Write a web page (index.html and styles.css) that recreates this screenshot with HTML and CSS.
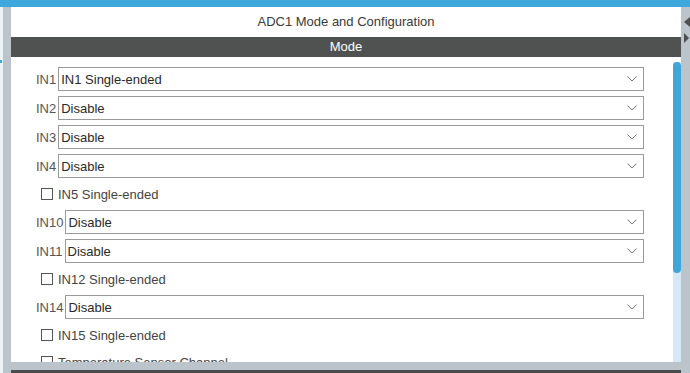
FILE: index.html
```html
<!DOCTYPE html>
<html lang="en">
<head>
    <meta charset="UTF-8" />
    <meta name="viewport" content="width=device-width, initial-scale=1.0" />
    <title>ADC1 Mode and Configuration</title>
    <link rel="stylesheet" href="styles.css">
</head>
<body>
    <div class="topbar"></div>
    <div class="frame">
        <div class="side-left"><span class="side-mark"></span></div>
        <div class="column">
            <div class="panel">
                <div class="panel-title">ADC1 Mode and Configuration</div>
                <div class="panel-header">Mode</div>
                <div class="panel-body">
                    <div class="content">
                        <div class="row">
                            <label class="row-label">IN1</label>
                            <div class="select"><span>IN1 Single-ended</span><svg class="chevron" width="10" height="6" viewBox="0 0 10 6"><path d="M0.5 0.5 L5 5 L9.5 0.5" fill="none" stroke="#777" stroke-width="1"/></svg></div>
                        </div>
                        <div class="row">
                            <label class="row-label">IN2</label>
                            <div class="select"><span>Disable</span><svg class="chevron" width="10" height="6" viewBox="0 0 10 6"><path d="M0.5 0.5 L5 5 L9.5 0.5" fill="none" stroke="#777" stroke-width="1"/></svg></div>
                        </div>
                        <div class="row">
                            <label class="row-label">IN3</label>
                            <div class="select"><span>Disable</span><svg class="chevron" width="10" height="6" viewBox="0 0 10 6"><path d="M0.5 0.5 L5 5 L9.5 0.5" fill="none" stroke="#777" stroke-width="1"/></svg></div>
                        </div>
                        <div class="row">
                            <label class="row-label">IN4</label>
                            <div class="select"><span>Disable</span><svg class="chevron" width="10" height="6" viewBox="0 0 10 6"><path d="M0.5 0.5 L5 5 L9.5 0.5" fill="none" stroke="#777" stroke-width="1"/></svg></div>
                        </div>
                        <div class="check-row"><span class="box"></span>IN5 Single-ended</div>
                        <div class="row">
                            <label class="row-label">IN10</label>
                            <div class="select"><span>Disable</span><svg class="chevron" width="10" height="6" viewBox="0 0 10 6"><path d="M0.5 0.5 L5 5 L9.5 0.5" fill="none" stroke="#777" stroke-width="1"/></svg></div>
                        </div>
                        <div class="row">
                            <label class="row-label">IN11</label>
                            <div class="select"><span>Disable</span><svg class="chevron" width="10" height="6" viewBox="0 0 10 6"><path d="M0.5 0.5 L5 5 L9.5 0.5" fill="none" stroke="#777" stroke-width="1"/></svg></div>
                        </div>
                        <div class="check-row"><span class="box"></span>IN12 Single-ended</div>
                        <div class="row">
                            <label class="row-label">IN14</label>
                            <div class="select"><span>Disable</span><svg class="chevron" width="10" height="6" viewBox="0 0 10 6"><path d="M0.5 0.5 L5 5 L9.5 0.5" fill="none" stroke="#777" stroke-width="1"/></svg></div>
                        </div>
                        <div class="check-row"><span class="box"></span>IN15 Single-ended</div>
                        <div class="check-row"><span class="box"></span>Temperature Sensor Channel</div>
                    </div>
                    <div class="scrollbar">
                        <div class="track"><div class="thumb"></div></div>
                    </div>
                </div>
            </div>
            <div class="bottom-bar"></div>
        </div>
        <div class="side-right">
            <svg width="8" height="30" viewBox="0 0 8 30">
                <polygon points="7,3 1,8 7,13" fill="#4e4f4f"/>
                <polygon points="1,19 6,24 1,29" fill="#4e4f4f"/>
            </svg>
        </div>
    </div>
</body>
</html>
```

FILE: styles.css
```css
body {
    font-family: "Liberation Sans", Arial, sans-serif;
    font-size: 13px;
    margin: 0;
    width: 690px;
    height: 373px;
    overflow: hidden;
    background-color: #bac4ca;
}

.topbar {
    height: 7px;
    background-color: #3ea8dc;
}

.frame {
    display: flex;
    height: 366px;
    background-color: #bac4ca;
    border-left: 3px solid #edf2f5;
    box-sizing: border-box;
}

.side-left {
    width: 8px;
    position: relative;
}

.side-mark {
    position: absolute;
    left: -3px;
    top: 53px;
    width: 2px;
    height: 3px;
    background-color: #3ea8dc;
}

.column {
    width: 670px;
    display: flex;
    flex-direction: column;
}

.panel {
    height: 355px;
    background-color: #fff;
    display: flex;
    flex-direction: column;
}

.panel-title {
    height: 30px;
    line-height: 29px;
    text-align: center;
    color: #3a3a3a;
}

.panel-header {
    height: 20px;
    line-height: 19px;
    text-align: center;
    color: #fff;
    background-color: #505251;
}

.panel-body {
    flex: 1;
    display: flex;
    overflow: hidden;
}

.content {
    flex: 1;
    padding: 10px 29px 0 25px;
    overflow: hidden;
}

.row {
    display: flex;
    align-items: center;
    height: 24px;
    margin-bottom: 5px;
}

.row-label {
    color: #555;
    margin-right: 2px;
}

.select {
    flex: 1;
    height: 24px;
    box-sizing: border-box;
    border: 1px solid #9a9a9a;
    display: flex;
    align-items: center;
    justify-content: space-between;
    padding: 0 6px 0 2px;
    color: #2a2a2a;
}

.chevron {
    display: block;
}

.check-row {
    display: flex;
    align-items: center;
    height: 22px;
    margin-bottom: 5px;
    padding-left: 5px;
    color: #444;
}

.box {
    width: 12px;
    height: 12px;
    box-sizing: border-box;
    border: 1px solid #555;
    background-color: #fff;
    margin-right: 5px;
}

.scrollbar {
    width: 8px;
    padding-top: 5px;
    display: flex;
}

.track {
    flex: 1;
    background-color: #d6e8f6;
}

.thumb {
    height: 211px;
    background-color: #3ea6d9;
    border-radius: 4px;
}

.bottom-bar {
    margin-top: 8px;
    height: 3px;
    background-color: #4b4c4c;
}

.side-right {
    width: 9px;
    padding: 7px 0 0 2px;
    box-sizing: border-box;
}

.side-right svg {
    display: block;
}
```
